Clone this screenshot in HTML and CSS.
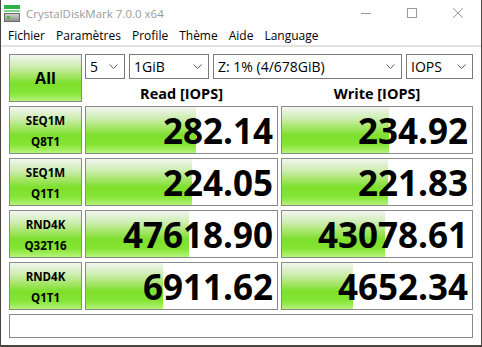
FILE: index.html
```html
<!DOCTYPE html>
<html lang="fr">
<head>
<meta charset="utf-8">
<title>CrystalDiskMark 7.0.0 x64</title>
<link rel="stylesheet" href="styles.css">
</head>
<body>
<div class="window">
  <header class="titlebar">
    <svg class="app-icon" width="16" height="17" viewBox="0 0 16 17">
      <rect x="0" y="0" width="16" height="4" fill="#2eb14a"/>
      <rect x="0" y="5" width="16" height="2" fill="#7fd38a"/>
      <defs>
        <linearGradient id="disk" x1="0" y1="0" x2="0" y2="1">
          <stop offset="0" stop-color="#d8d8d8"/>
          <stop offset="1" stop-color="#8a8a8a"/>
        </linearGradient>
      </defs>
      <rect x="0.5" y="8.5" width="15" height="8" fill="url(#disk)" stroke="#6a6a6a"/>
      <rect x="3" y="11" width="3" height="3" fill="#33cc33"/>
    </svg>
    <span class="title">CrystalDiskMark 7.0.0 x64</span>
    <div class="controls">
      <span class="ctl"><svg width="10" height="10" viewBox="0 0 10 10"><line x1="0" y1="5.5" x2="10" y2="5.5" stroke="#999" stroke-width="1"/></svg></span>
      <span class="ctl"><svg width="10" height="10" viewBox="0 0 10 10"><rect x="0.5" y="0.5" width="9" height="9" fill="none" stroke="#999" stroke-width="1"/></svg></span>
      <span class="ctl"><svg width="10" height="10" viewBox="0 0 10 10"><path d="M0 0 L10 10 M10 0 L0 10" stroke="#999" stroke-width="1"/></svg></span>
    </div>
  </header>
  <nav class="menubar">
    <span class="menu-item">Fichier</span>
    <span class="menu-item">Paramètres</span>
    <span class="menu-item">Profile</span>
    <span class="menu-item">Thème</span>
    <span class="menu-item">Aide</span>
    <span class="menu-item">Language</span>
  </nav>
  <main class="grid">
    <div class="btn all">All</div>
    <div class="selects">
      <div class="combo c-count"><span>5</span><svg class="chev" width="9" height="5" viewBox="0 0 9 5"><path d="M0.5 0.5 L4.5 4.5 L8.5 0.5" fill="none" stroke="#606060"/></svg></div>
      <div class="combo c-size"><span>1GiB</span><svg class="chev" width="9" height="5" viewBox="0 0 9 5"><path d="M0.5 0.5 L4.5 4.5 L8.5 0.5" fill="none" stroke="#606060"/></svg></div>
      <div class="combo c-drive"><span>Z: 1% (4/678GiB)</span><svg class="chev" width="9" height="5" viewBox="0 0 9 5"><path d="M0.5 0.5 L4.5 4.5 L8.5 0.5" fill="none" stroke="#606060"/></svg></div>
      <div class="combo c-unit"><span>IOPS</span><svg class="chev" width="9" height="5" viewBox="0 0 9 5"><path d="M0.5 0.5 L4.5 4.5 L8.5 0.5" fill="none" stroke="#606060"/></svg></div>
    </div>
    <div class="head">Read [IOPS]</div>
    <div class="head">Write [IOPS]</div>

    <div class="btn label">SEQ1M<br>Q8T1</div>
    <div class="value" style="background-size:110px 100%">282.14</div>
    <div class="value" style="background-size:107px 100%">234.92</div>

    <div class="btn label">SEQ1M<br>Q1T1</div>
    <div class="value" style="background-size:106px 100%">224.05</div>
    <div class="value" style="background-size:106px 100%">221.83</div>

    <div class="btn label">RND4K<br>Q32T16</div>
    <div class="value" style="background-size:103px 100%">47618.90</div>
    <div class="value" style="background-size:103px 100%">43078.61</div>

    <div class="btn label">RND4K<br>Q1T1</div>
    <div class="value" style="background-size:77px 100%">6911.62</div>
    <div class="value" style="background-size:71px 100%">4652.34</div>

    <div class="status"></div>
  </main>
</div>
</body>
</html>
```
FILE: styles.css
```css
* { box-sizing: border-box; }
html, body { margin: 0; padding: 0; background: #ffffff; }
body { font-family: "Open Sans", "Noto Sans", sans-serif; color: #000; }

.window {
  width: 482px;
  height: 347px;
  background: #ffffff;
  border-left: 1px solid #4a443e;
  border-right: 1px solid #4a443e;
  border-bottom: 2px solid #4a443e;
  display: flex;
  flex-direction: column;
  overflow: hidden;
}

.titlebar {
  height: 25px;
  display: flex;
  align-items: center;
  padding-left: 3px;
  padding-top: 1px;
  flex: none;
}
.app-icon { display: block; }
.title {
  margin-left: 6px;
  font-size: 11.5px;
  color: #9a9a9a;
  white-space: nowrap;
}
.controls { margin-left: auto; display: flex; height: 24px; }
.ctl {
  width: 46px;
  display: flex;
  align-items: center;
  justify-content: center;
}
.ctl svg { display: block; }

.menubar {
  height: 22px;
  display: flex;
  align-items: center;
  padding-left: 7px;
  gap: 11px;
  font-size: 12px;
  border-bottom: 2px solid #e2e2e2;
  flex: none;
}
.menu-item { white-space: nowrap; }

.grid {
  display: grid;
  grid-template-columns: 73px 193px 192px;
  grid-template-rows: 25px 19px 48px 48px 48px 48px 24px;
  column-gap: 3px;
  row-gap: 4px;
  padding: 7px 0 0 8px;
}

.btn {
  border: 1px solid #8a8a8a;
  background: linear-gradient(to bottom, #f2f4f0 0%, #cdeeb0 25%, #9ee45c 48%, #7de02c 62%, #86e534 82%, #b4f47a 100%);
  display: flex;
  align-items: center;
  justify-content: center;
  text-align: center;
  font-weight: 700;
}
.all { grid-row: 1 / span 2; font-size: 16px; }
.label { font-size: 11.5px; line-height: 21px; padding-top: 1px; }

.selects {
  grid-column: 2 / span 2;
  display: flex;
  gap: 4px;
}
.combo {
  height: 25px;
  border: 1px solid #7a7a7a;
  background: #fff;
  display: flex;
  align-items: center;
  padding: 0 6px 0 4px;
  font-size: 14px;
  white-space: nowrap;
}
.combo span { flex: 1; }
.chev { display: block; flex: none; }
.c-count { width: 40px; }
.c-size { width: 80px; }
.c-drive { width: 189px; }
.c-unit { width: 67px; }

.head {
  font-size: 14.5px;
  font-weight: 700;
  text-align: center;
  line-height: 19px;
  padding-top: 1px;
}

.value {
  border: 1px solid #8a8a8a;
  background-color: #fff;
  background-image: linear-gradient(to bottom, #f2f4f0 0%, #cdeeb0 25%, #9ee45c 48%, #7de02c 62%, #86e534 82%, #b4f47a 100%);
  background-repeat: no-repeat;
  display: flex;
  align-items: center;
  justify-content: flex-end;
  padding-right: 4px;
  font-size: 35px;
  font-weight: 700;
  white-space: nowrap;
}

.status {
  grid-column: 1 / span 3;
  border: 1px solid #8a8a8a;
  background: #fff;
}
```
